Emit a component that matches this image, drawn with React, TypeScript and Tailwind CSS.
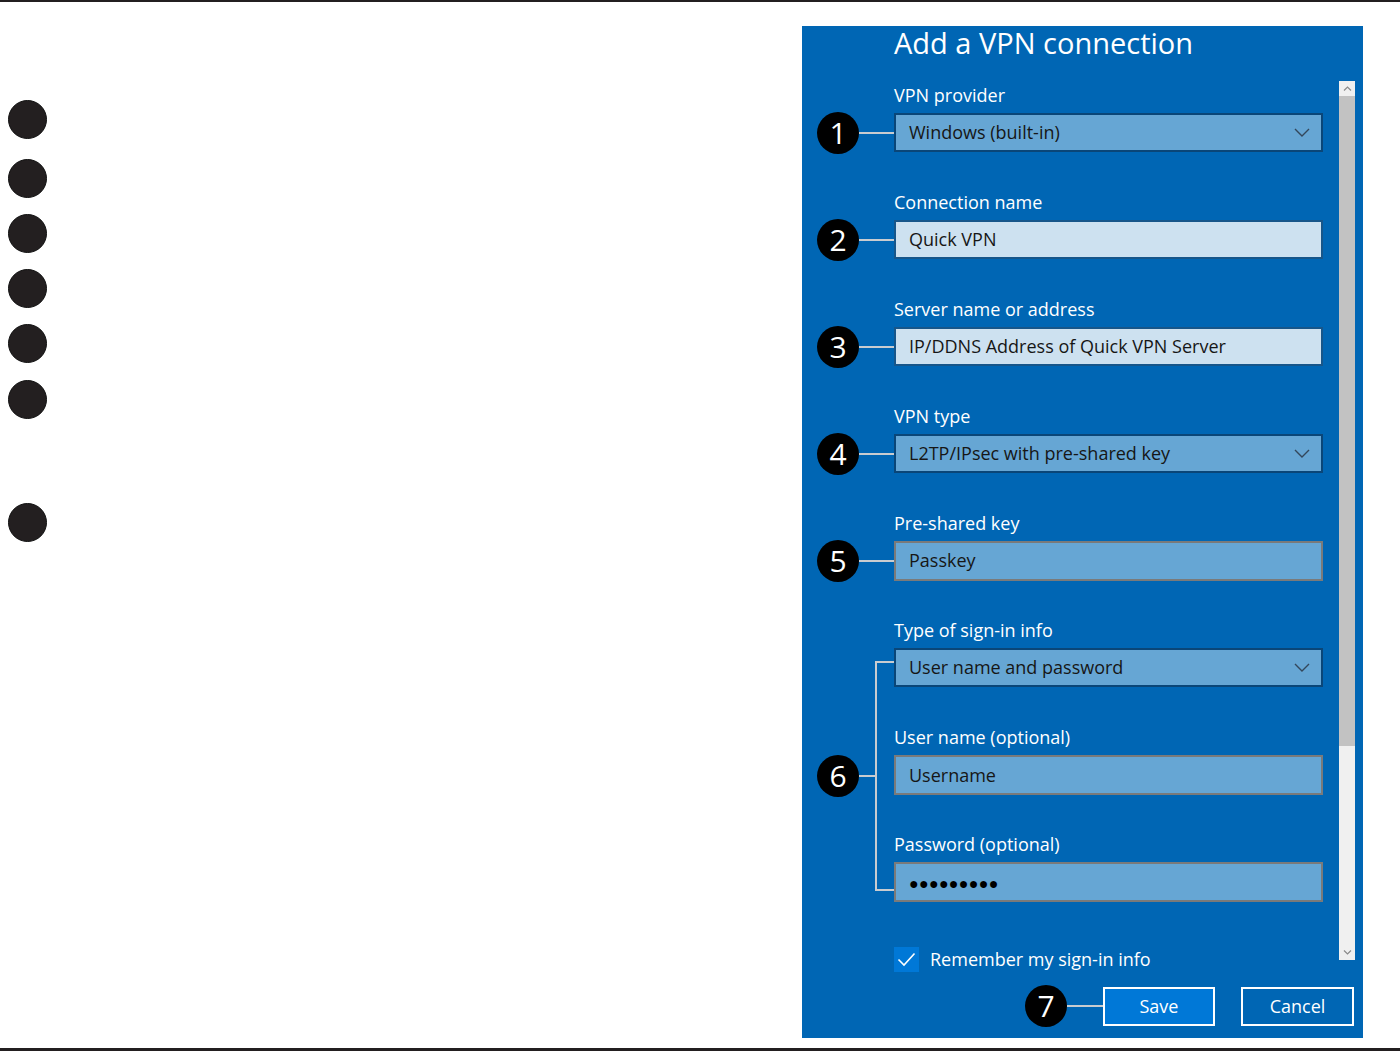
import React from "react";

const F = "font-['Open_Sans',sans-serif]";

function Num({ n }: { n: string }) {
  return (
    <div className="w-[42px] h-[42px] shrink-0 rounded-full bg-black text-white flex items-center justify-center text-[30px] leading-none font-['Open_Sans',sans-serif] font-medium">
      {n}
    </div>
  );
}

function Chevron() {
  return (
    <svg width="16" height="9" viewBox="0 0 16 9" className="shrink-0">
      <path d="M1 1 L8 8 L15 1" stroke="#33475b" strokeWidth="1.4" fill="none" />
    </svg>
  );
}

type Kind = "dropdown" | "light" | "gray";

function Box({ kind, children }: { kind: Kind; children: React.ReactNode }) {
  const cls =
    kind === "dropdown"
      ? "h-[39px] bg-[#66a6d4] border-2 border-[#0a4678] pr-[11px]"
      : kind === "light"
      ? "h-[39px] bg-[#cde1f0] border-2 border-[#17568a]"
      : "h-[40px] bg-[#66a6d4] border-2 border-[#7a7a7a]";
  return (
    <div className={`w-[429px] shrink-0 flex items-center justify-between pl-[13px] text-[18px] text-[#161616] ${cls}`}>
      <span className="whitespace-nowrap">{children}</span>
      {kind === "dropdown" && <Chevron />}
    </div>
  );
}

function Label({ children, indent = true }: { children: React.ReactNode; indent?: boolean }) {
  return (
    <div className={`${indent ? "pl-[77px]" : ""} h-[30px] leading-[24px] text-[18px] text-white whitespace-nowrap`}>
      {children}
    </div>
  );
}

function Field({ n, label, kind, value, first }: { n: string; label: string; kind: Kind; value: React.ReactNode; first?: boolean }) {
  return (
    <div className={first ? "" : "mt-[38px]"}>
      <Label>{label}</Label>
      <div className="h-[39px] flex items-center">
        <Num n={n} />
        <div className="w-[35px] h-[2px] bg-[#c9ccd0]" />
        <Box kind={kind}>{value}</Box>
      </div>
    </div>
  );
}

function Dots() {
  return <span className="tracking-[0.3px] text-[16px] font-['Liberation_Sans',sans-serif] text-black">●●●●●●●●●</span>;
}

export default function App() {
  const leftMargins = ["mt-[98px]", "mt-[20px]", "mt-[16px]", "mt-[16px]", "mt-[16px]", "mt-[17px]", "mt-[84px]"];
  return (
    <div className={`w-[1400px] h-[1051px] bg-white flex flex-col ${F}`}>
      <div className="h-[2px] bg-[#231f20] shrink-0" />
      <div className="flex-1 flex">
        {/* left bullets */}
        <div className="w-[802px] shrink-0 flex flex-col pl-[8px]">
          {leftMargins.map((m, i) => (
            <div key={i} className={`${m} w-[39px] h-[39px] rounded-full bg-[#231f20] border border-[#111]`} />
          ))}
        </div>

        {/* VPN panel */}
        <div className="mt-[24px] w-[561px] h-[1012px] bg-[#0066b4] flex flex-col">
          <div className="h-[55px] pl-[92px] text-[29px] leading-[34px] text-white whitespace-nowrap">Add a VPN connection</div>

          <div className="flex">
            <div className="pl-[15px] pt-[2px] w-[521px] shrink-0 flex flex-col">
              <Field first n="1" label="VPN provider" kind="dropdown" value="Windows (built-in)" />
              <Field n="2" label="Connection name" kind="light" value="Quick VPN" />
              <Field n="3" label="Server name or address" kind="light" value="IP/DDNS Address of Quick VPN Server" />
              <Field n="4" label="VPN type" kind="dropdown" value="L2TP/IPsec with pre-shared key" />
              <Field n="5" label="Pre-shared key" kind="gray" value="Passkey" />

              <div className="mt-[38px]">
                <Label>Type of sign-in info</Label>
                <div className="flex">
                  <div className="w-[77px] shrink-0 pt-[13px]">
                    <div className="h-[230px] flex items-center">
                      <Num n="6" />
                      <div className="w-[16px] h-[2px] bg-[#c9ccd0]" />
                      <div className="w-[19px] h-full border-l-2 border-y-2 border-[#c9ccd0]" />
                    </div>
                  </div>
                  <div className="flex flex-col">
                    <Box kind="dropdown">User name and password</Box>
                    <div className="mt-[38px]">
                      <Label indent={false}>User name (optional)</Label>
                    </div>
                    <Box kind="gray">Username</Box>
                    <div className="mt-[37px]">
                      <Label indent={false}>Password (optional)</Label>
                    </div>
                    <Box kind="gray"><Dots /></Box>
                  </div>
                </div>
              </div>

              <div className="mt-[45px] pl-[77px] flex items-center h-[25px]">
                <div className="w-[25px] h-[25px] bg-[#0078d7] flex items-center justify-center">
                  <svg width="19" height="15" viewBox="0 0 19 15">
                    <path d="M1.5 7.5 L7 13 L17.5 1.5" stroke="white" strokeWidth="1.6" fill="none" />
                  </svg>
                </div>
                <span className="ml-[11px] text-[18px] text-white whitespace-nowrap">Remember my sign-in info</span>
              </div>
            </div>

            {/* scrollbar */}
            <div className="ml-[16px] w-[16px] h-[879px] bg-[#f0f0f0] flex flex-col">
              <div className="h-[15px] flex items-center justify-center">
                <svg width="9" height="5" viewBox="0 0 9 5"><path d="M1 4.5 L4.5 1 L8 4.5" stroke="#8a8a8a" strokeWidth="1.2" fill="none" /></svg>
              </div>
              <div className="h-[650px] bg-[#c2c2c2]" />
              <div className="flex-1" />
              <div className="h-[15px] flex items-center justify-center">
                <svg width="9" height="5" viewBox="0 0 9 5"><path d="M1 0.5 L4.5 4 L8 0.5" stroke="#8a8a8a" strokeWidth="1.2" fill="none" /></svg>
              </div>
            </div>
          </div>

          <div className="mt-[13px] pr-[9px] flex items-center justify-end">
            <Num n="7" />
            <div className="w-[36px] h-[2px] bg-[#c9ccd0]" />
            <div className="w-[112px] h-[39px] border-2 border-white bg-[#0078d7] text-white text-[18px] flex items-center justify-center">Save</div>
            <div className="ml-[26px] w-[113px] h-[39px] border-2 border-white text-white text-[18px] flex items-center justify-center">Cancel</div>
          </div>
        </div>
      </div>
      <div className="h-[3px] bg-[#231f20] shrink-0" />
    </div>
  );
}
